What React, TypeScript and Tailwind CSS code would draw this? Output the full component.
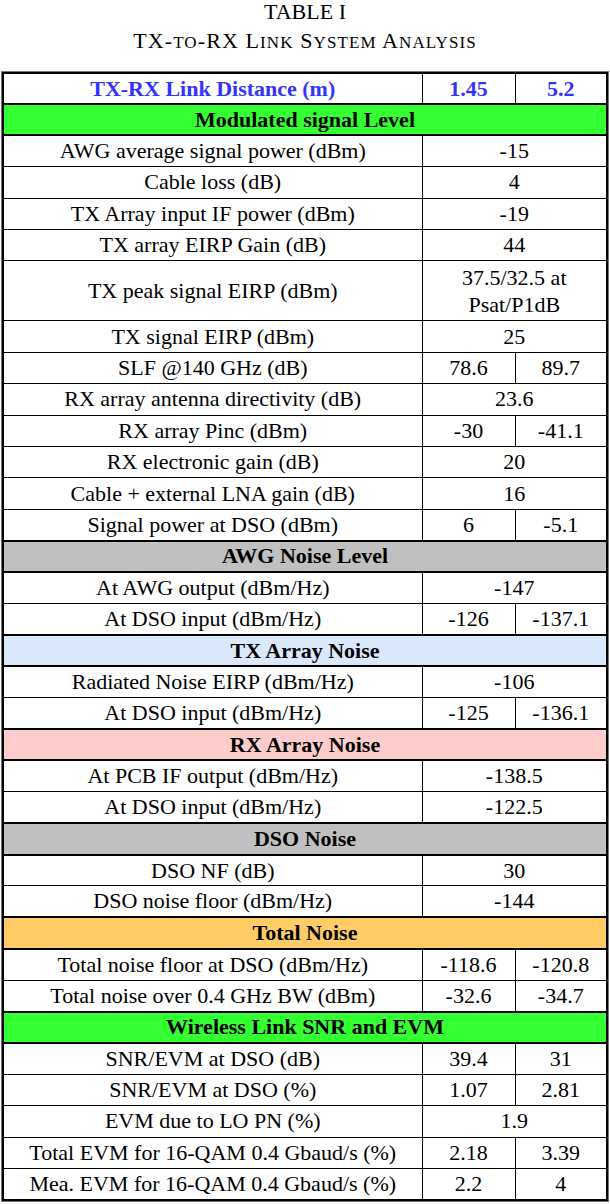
type Row =
  | { kind: "sec"; label: string; bg: string }
  | { kind: "one"; label: string; value: string; value2?: string }
  | { kind: "two"; label: string; a: string; b: string };

const rows: Row[] = [
  { kind: "sec", label: "Modulated signal Level", bg: "bg-[#33ff33]" },
  { kind: "one", label: "AWG average signal power (dBm)", value: "-15" },
  { kind: "one", label: "Cable loss (dB)", value: "4" },
  { kind: "one", label: "TX Array input IF power (dBm)", value: "-19" },
  { kind: "one", label: "TX array EIRP Gain (dB)", value: "44" },
  { kind: "one", label: "TX peak signal EIRP (dBm)", value: "37.5/32.5 at", value2: "Psat/P1dB" },
  { kind: "one", label: "TX signal EIRP (dBm)", value: "25" },
  { kind: "two", label: "SLF @140 GHz (dB)", a: "78.6", b: "89.7" },
  { kind: "one", label: "RX array antenna directivity (dB)", value: "23.6" },
  { kind: "two", label: "RX array Pinc (dBm)", a: "-30", b: "-41.1" },
  { kind: "one", label: "RX electronic gain (dB)", value: "20" },
  { kind: "one", label: "Cable + external LNA gain (dB)", value: "16" },
  { kind: "two", label: "Signal power at DSO (dBm)", a: "6", b: "-5.1" },
  { kind: "sec", label: "AWG Noise Level", bg: "bg-[#c0c0c0]" },
  { kind: "one", label: "At AWG output (dBm/Hz)", value: "-147" },
  { kind: "two", label: "At DSO input (dBm/Hz)", a: "-126", b: "-137.1" },
  { kind: "sec", label: "TX Array Noise", bg: "bg-[#dae8fc]" },
  { kind: "one", label: "Radiated Noise EIRP (dBm/Hz)", value: "-106" },
  { kind: "two", label: "At DSO input (dBm/Hz)", a: "-125", b: "-136.1" },
  { kind: "sec", label: "RX Array Noise", bg: "bg-[#ffcccc]" },
  { kind: "one", label: "At PCB IF output (dBm/Hz)", value: "-138.5" },
  { kind: "one", label: "At DSO input (dBm/Hz)", value: "-122.5" },
  { kind: "sec", label: "DSO Noise", bg: "bg-[#c0c0c0]" },
  { kind: "one", label: "DSO NF (dB)", value: "30" },
  { kind: "one", label: "DSO noise floor (dBm/Hz)", value: "-144" },
  { kind: "sec", label: "Total Noise", bg: "bg-[#ffcc66]" },
  { kind: "two", label: "Total noise floor at DSO (dBm/Hz)", a: "-118.6", b: "-120.8" },
  { kind: "two", label: "Total noise over 0.4 GHz BW (dBm)", a: "-32.6", b: "-34.7" },
  { kind: "sec", label: "Wireless Link SNR and EVM", bg: "bg-[#33ff33]" },
  { kind: "two", label: "SNR/EVM at DSO (dB)", a: "39.4", b: "31" },
  { kind: "two", label: "SNR/EVM at DSO (%)", a: "1.07", b: "2.81" },
  { kind: "one", label: "EVM due to LO PN (%)", value: "1.9" },
  { kind: "two", label: "Total EVM for 16-QAM 0.4 Gbaud/s (%)", a: "2.18", b: "3.39" },
  { kind: "two", label: "Mea. EVM for 16-QAM 0.4 Gbaud/s (%)", a: "2.2", b: "4" },
];

const cell = "border-[1.5px] border-black text-center align-middle p-0 whitespace-nowrap";

// caption in small caps: large capitals + smaller capitals
function Sc({ children }: { children: string }) {
  return <span className="text-[17px] uppercase">{children}</span>;
}

export default function App() {
  return (
    <div className="w-[610px] h-[1204px] bg-white text-black font-['Liberation_Serif',serif] text-[22px] leading-none">
      <div className="text-center pt-[1px] leading-[22px]">TABLE I</div>
      <div className="text-center mt-[7px] leading-[22px] tracking-[1.1px]">
        TX-<Sc>to</Sc>-RX L<Sc>ink</Sc> S<Sc>ystem</Sc> A<Sc>nalysis</Sc>
      </div>
      <div className="mt-[17px] mx-[1px] border border-[#777]">
        <table className="w-full border-collapse border-2 border-black table-fixed">
          <colgroup>
            <col className="w-[419px]" />
            <col className="w-[93px]" />
            <col />
          </colgroup>
          <tbody>
            <tr className="h-[31px]">
              <td className={`${cell} text-[#3333ff] font-bold`}>TX-RX Link Distance (m)</td>
              <td className={`${cell} text-[#3333ff] font-bold`}>1.45</td>
              <td className={`${cell} text-[#3333ff] font-bold`}>5.2</td>
            </tr>
            {rows.map((r, i) => {
              if (r.kind === "sec") {
                return (
                  <tr key={i} className="h-[31.4px]">
                    <td colSpan={3} className={`${cell} ${r.bg} font-bold border-y-2`}>
                      {r.label}
                    </td>
                  </tr>
                );
              }
              if (r.kind === "one") {
                return (
                  <tr key={i} className={r.value2 ? "h-[60px]" : "h-[31.4px]"}>
                    <td className={cell}>{r.label}</td>
                    <td colSpan={2} className={`${cell} ${r.value2 ? "leading-[27px]" : ""}`}>
                      {r.value}
                      {r.value2 && (
                        <>
                          <br />
                          {r.value2}
                        </>
                      )}
                    </td>
                  </tr>
                );
              }
              return (
                <tr key={i} className="h-[31.4px]">
                  <td className={cell}>{r.label}</td>
                  <td className={cell}>{r.a}</td>
                  <td className={cell}>{r.b}</td>
                </tr>
              );
            })}
          </tbody>
        </table>
      </div>
    </div>
  );
}
